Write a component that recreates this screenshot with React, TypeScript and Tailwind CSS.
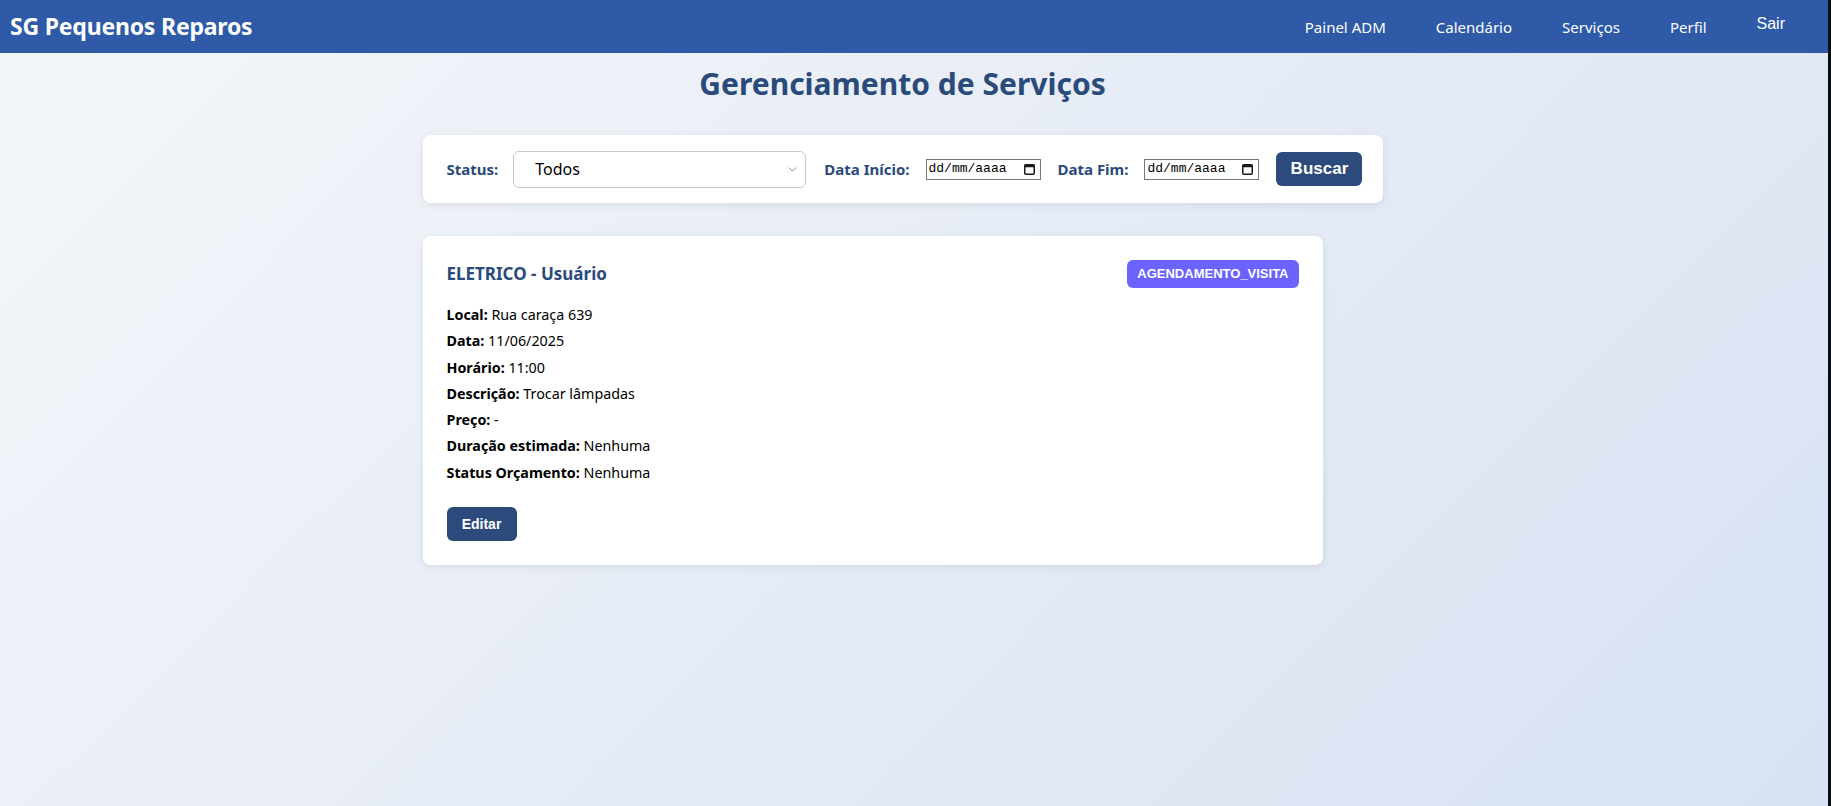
import { ChevronDown } from 'lucide-react';

const navLinks = ['Painel ADM', 'Calendário', 'Serviços', 'Perfil'];

const detalhes: [string, string][] = [
  ['Local:', 'Rua caraça 639'],
  ['Data:', '11/06/2025'],
  ['Horário:', '11:00'],
  ['Descrição:', 'Trocar lâmpadas'],
  ['Preço:', '-'],
  ['Duração estimada:', 'Nenhuma'],
  ['Status Orçamento:', 'Nenhuma'],
];

const CalendarIcon = () => (
  <svg width="11" height="12" viewBox="0 0 11 12" className="shrink-0">
    <rect x="0.75" y="1.75" width="9.5" height="9.5" rx="1" fill="none" stroke="#1a1a1a" strokeWidth="1.5" />
    <rect x="0.75" y="1.75" width="9.5" height="2.5" fill="#1a1a1a" />
  </svg>
);

const DateField = () => (
  <div className="flex h-[21px] w-[115px] shrink-0 items-center justify-between border border-[#767676] bg-white pl-[2px] pr-[5px] font-['Liberation_Mono',monospace] text-[13px] text-black">
    <span>dd/mm/aaaa</span>
    <CalendarIcon />
  </div>
);

export default function App() {
  return (
    <div className="flex min-h-screen font-['Noto_Sans',sans-serif]">
      <div className="flex min-h-screen flex-1 flex-col bg-[linear-gradient(135deg,#f4f6f9_0%,#d8e2f3_100%)]">
        <header className="flex h-[53px] items-center justify-between bg-[#2e5aa8] pl-[10px] pr-[43px] text-white">
          <h1 className="text-[23px] font-bold tracking-[-0.2px]">SG Pequenos Reparos</h1>
          <nav className="flex items-center gap-[50px] text-[15px]">
            {navLinks.map((link) => (
              <a key={link} href="#" className="pt-[1px]">
                {link}
              </a>
            ))}
            <button className="mb-[5px] font-['Liberation_Sans',sans-serif] text-[16px]">Sair</button>
          </nav>
        </header>

        <main className="flex-1 pr-[23px]">
          <div className="mx-auto w-[1000px] px-5">
            <h2 className="mt-[8px] text-center text-[30px] font-bold text-[#2a4a7b]">Gerenciamento de Serviços</h2>

            <div className="mt-[29px] flex h-[68px] items-center whitespace-nowrap rounded-lg bg-white px-6 shadow-[0_2px_8px_rgba(0,0,0,0.08)]">
              <label className="mr-[15px] shrink-0 text-[15px] font-bold text-[#2a4a7b]">Status:</label>
              <div className="flex h-[37px] w-[293px] shrink-0 items-center justify-between rounded-md border border-[#c8c8c8] bg-white pl-[21px] pr-[6px] text-[16px] text-black">
                <span>Todos</span>
                <ChevronDown size={13} strokeWidth={1.5} className="text-[#6b6b6b]" />
              </div>
              <label className="ml-[18px] mr-[16px] shrink-0 text-[15px] font-bold text-[#2a4a7b]">Data Início:</label>
              <DateField />
              <label className="ml-[17px] mr-[16px] shrink-0 text-[15px] font-bold text-[#2a4a7b]">Data Fim:</label>
              <DateField />
              <button className="ml-[17px] h-[34px] w-[86px] shrink-0 rounded-md bg-[#2c4a7c] font-['Liberation_Sans',sans-serif] text-[17px] font-bold text-white">
                Buscar
              </button>
            </div>

            <div className="mt-[33px] w-[900px] rounded-lg bg-white p-6 shadow-[0_2px_8px_rgba(0,0,0,0.08)]">
              <div className="flex items-center justify-between">
                <h3 className="text-[17px] font-bold text-[#2a4a7b]">ELETRICO - Usuário</h3>
                <span className="flex h-[28px] items-center rounded-md bg-[#6c63ff] px-[10px] font-['Liberation_Sans',sans-serif] text-[13px] font-bold text-white">
                  AGENDAMENTO_VISITA
                </span>
              </div>
              <div className="mt-[14px] text-[14.3px] text-black">
                {detalhes.map(([rotulo, valor]) => (
                  <p key={rotulo} className="leading-[26.3px]">
                    <strong className="font-bold">{rotulo}</strong> {valor}
                  </p>
                ))}
              </div>
              <button className="mt-[21px] h-[34px] w-[70px] rounded-md bg-[#2c4a7c] font-['Liberation_Sans',sans-serif] text-[14px] font-bold text-white">
                Editar
              </button>
            </div>
          </div>
        </main>
      </div>
      <div className="w-[3px] shrink-0 bg-[#0b0b10]" />
    </div>
  );
}
